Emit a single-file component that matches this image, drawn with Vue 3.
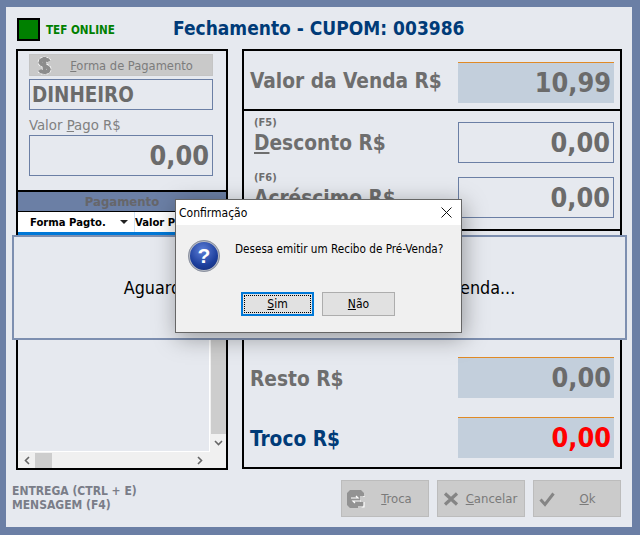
<script setup>
const rightRows = [
  { label: 'Resto R$', value: '0,00', cls: '' },
  { label: 'Troco R$', value: '0,00', cls: 'troco' }
]
</script>

<template>
  <div class="window">
    <header class="top">
      <span class="led"></span>
      <span class="tef">TEF ONLINE</span>
      <h1 class="title">Fechamento - CUPOM: 003986</h1>
    </header>

    <main class="cols">
      <section class="left">
        <div class="pay-form">
          <div class="form-btn">
            <svg class="dollar" width="15" height="19" viewBox="0 0 20 25">
              <path d="M16 7C14 3.500 5 3 4.500 8S16 12.500 15.800 17.500 6 22.500 3.500 18.500M10 1v23" fill="none" stroke="#fff" stroke-width="7" stroke-dasharray="2 1" />
              <path d="M16 7C14 3.500 5 3 4.500 8S16 12.500 15.800 17.500 6 22.500 3.500 18.500M10 1v23" fill="none" stroke="#8c8c8c" stroke-width="5" />
            </svg>
            <span><u>F</u>orma de Pagamento</span>
          </div>
          <div class="name-field">DINHEIRO</div>
          <div class="pago-label">Valor <u>P</u>ago R$</div>
          <div class="field outlined pago">0,00</div>
        </div>

        <div class="pay-head">Pagamento</div>
        <div class="grid-head">
          <div class="col-a">Forma Pagto.<i class="caret"></i></div>
          <div class="col-b">Valor Pago</div>
        </div>
        <div class="list">
          <div class="list-body"></div>
          <div class="vbar">
            <div class="vthumb"></div>
            <svg width="9" height="6" viewBox="0 0 9 6"><path d="M1 1l3.500 3.500L8 1" fill="none" stroke="#666" stroke-width="1.600" /></svg>
          </div>
        </div>
        <div class="hbar">
          <svg width="6" height="9" viewBox="0 0 6 9"><path d="M5 1L1.500 4.500 5 8" fill="none" stroke="#666" stroke-width="1.600" /></svg>
          <div class="hthumb"></div>
          <svg width="6" height="9" viewBox="0 0 6 9"><path d="M1 1l3.500 3.500L1 8" fill="none" stroke="#666" stroke-width="1.600" /></svg>
        </div>
      </section>

      <section class="right">
        <div class="sec sec-one">
          <div class="row">
            <span class="lbl first">Valor da Venda R$</span>
            <div class="field shaded">10,99</div>
          </div>
        </div>
        <div class="sec sec-two">
          <div class="row">
            <span class="lbl stacked"><small>(F5)</small><span><u>D</u>esconto R$</span></span>
            <div class="field outlined">0,00</div>
          </div>
          <div class="row">
            <span class="lbl stacked"><small>(F6)</small><span><u>A</u>créscimo R$</span></span>
            <div class="field outlined">0,00</div>
          </div>
        </div>
        <div class="sec sec-three">
          <div v-for="r in rightRows" :key="r.label" class="row" :class="r.cls">
            <span class="lbl first">{{ r.label }}</span>
            <div class="field shaded">{{ r.value }}</div>
          </div>
        </div>
      </section>
    </main>

    <footer class="bottom">
      <div class="hints">
        <div>ENTREGA (CTRL + E)</div>
        <div>MENSAGEM (F4)</div>
      </div>
      <div class="actions">
        <button class="act">
          <svg width="18" height="18" viewBox="0 0 18 18">
            <path d="M3 0h11l3 3v3H13v6h4v3l-3 3H3l-3-3V3z" fill="#929292" />
            <path d="M4 8h7l-2-2M14 11H6l2 2M17 7v-1M17 12v5h-6" fill="none" stroke="#fff" stroke-width="1.200" />
          </svg>
          <span class="act-text"><u>T</u>roca</span>
        </button>
        <button class="act">
          <svg width="16" height="16" viewBox="0 0 16 16"><path d="M2 2.500l12 11M14 2.500L2 13.500" stroke="#858585" stroke-width="3.200" fill="none" /></svg>
          <span class="act-text"><u>C</u>ancelar</span>
        </button>
        <button class="act">
          <svg width="16" height="16" viewBox="0 0 16 16"><path d="M1.500 8.500l4.500 5L14.500 2.500" stroke="#858585" stroke-width="3" fill="none" /></svg>
          <span class="act-text"><u>O</u>k</span>
        </button>
      </div>
    </footer>

    <div class="wait">Aguardando Finalização da Gravação da Venda...</div>

    <div class="dialog">
      <div class="dlg-title">
        <span>Confirmação</span>
        <svg width="11" height="11" viewBox="0 0 11 11"><path d="M.5.500l10 10M10.500.500l-10 10" stroke="#111" stroke-width="1" fill="none" /></svg>
      </div>
      <div class="dlg-body">
        <div class="dlg-msg">
          <div class="qicon">?</div>
          <p>Desesa emitir um Recibo de Pré-Venda?</p>
        </div>
        <div class="dlg-btns">
          <button class="dbtn focus"><span class="dots"><u>S</u>im</span></button>
          <button class="dbtn"><u>N</u>ão</button>
        </div>
      </div>
    </div>
  </div>
</template>

<style>
html, body { margin: 0; background: #6b7fa5; }
</style>

<style scoped>
* { box-sizing: border-box; }
.window {
  position: relative;
  width: 626px;
  height: 520px;
  margin: 7px 0 0 6px;
  background: #e6e9ef;
  font-family: Tahoma, "DejaVu Sans Condensed", "Noto Sans", sans-serif;
  color: #6b6b6b;
}
.top { display: flex; align-items: center; height: 42px; padding: 3px 0 0 11px; }
.led { width: 23px; height: 23px; background: #008000; border: 2px solid #000; }
.tef { margin-left: 6px; width: 127px; font-size: 11.600px; font-weight: 700; color: #008000; }
.title { margin: 0 0 4px; font-size: 19px; font-weight: 700; color: #003b78; }
.cols { display: flex; align-items: flex-start; gap: 14px; padding-left: 10px; }
.left { width: 212px; height: 421px; border: 2px solid #000; display: flex; flex-direction: column; }
.pay-form { height: 139px; padding: 3px 13px 0 11px; }
.form-btn {
  position: relative; height: 22px; background: #c9c9c9; border: 1px solid #c4c4c4;
  display: flex; align-items: center; justify-content: center; padding-left: 21px;
  font-size: 12.800px; color: #7c7c7c;
}
.dollar { position: absolute; left: 7px; top: 1px; }
.name-field { height: 31px; margin-top: 3px; border: 1px solid #6b7fa5; padding-left: 2px; font-size: 20.400px; line-height: 31px; font-weight: 700; }
.pago-label { height: 25px; padding-top: 5px; font-size: 14.800px; line-height: 20px; color: #808080; }
.field { width: 156px; height: 41px; text-align: right; padding-right: 3px; font-size: 26.800px; font-weight: 700; line-height: 41px; color: #6b6b6b; }
.outlined { border: 1px solid #6b7fa5; line-height: 39px; }
.shaded { background: #c3cfdc; border-top: 1px solid #e08a26; line-height: 39px; }
.pago { width: auto; }
.pay-head {
  height: 21px; background: #6b7fa5; border-top: 2px solid #000;
  text-align: center; font-size: 13px; line-height: 19px; font-weight: 700; color: #66666a;
}
.grid-head { display: flex; height: 24px; background: #fff; border-top: 1px solid #000; border-bottom: 3px solid #0078d7; font-size: 11.200px; font-weight: 700; color: #000; line-height: 21px; }
.col-a { position: relative; width: 117px; padding-left: 12px; border-right: 1px solid #cfe4f7; }
.col-b { white-space: nowrap; }
.caret { position: absolute; left: 102px; top: 8px; border: 4px solid transparent; border-top: 4px solid #222; border-bottom: 0; }
.list { flex: 1; display: flex; min-height: 0; }
.list-body { flex: 1; border-bottom: 1px solid #fff; border-right: 1px solid #fff; margin-left: 1px; }
.vbar { width: 16px; background: #f0f0f0; display: flex; flex-direction: column; align-items: center; justify-content: flex-end; padding-bottom: 6px; }
.vthumb { width: 15px; flex: 1; background: #cdcdcd; margin-bottom: 6px; }
.hbar { height: 16px; background: #f0f0f0; display: flex; align-items: center; padding-left: 6px; }
.hthumb { width: 17px; height: 15px; background: #cdcdcd; margin: 0 145px 0 5px; }
.right { width: 380px; height: 420px; border: 2px solid #000; display: flex; flex-direction: column; }
.sec { padding-right: 6px; padding-left: 6px; }
.row { display: flex; justify-content: space-between; align-items: center; }
.sec-one { height: 60px; padding-top: 11px; border-bottom: 2px solid #000; }
.sec-one .lbl { padding-bottom: 3px; }
.sec-two { height: 120px; padding-top: 11px; border-bottom: 2px solid #000; display: flex; flex-direction: column; gap: 14px; }
.sec-three { flex: 1; display: flex; flex-direction: column; justify-content: flex-end; gap: 19px; padding-bottom: 9px; }
.sec-three .lbl { padding-top: 3px; }
.lbl { font-size: 20.700px; font-weight: 700; color: #6e6e6e; }
.stacked { display: flex; flex-direction: column; align-self: flex-start; margin-top: -5px; padding-left: 4px; line-height: 25px; }
.stacked small { font-size: 11px; line-height: 12px; margin-bottom: 2px; }
.troco .lbl { color: #003b78; }
.troco .field { color: #ff0000; }
.bottom { display: flex; justify-content: space-between; align-items: flex-start; padding: 10px 11px 0 6px; }
.hints { padding-top: 4px; font-size: 12px; font-weight: 700; line-height: 14px; color: #7a7d88; }
.actions { display: flex; gap: 8px; }
.act {
  display: flex; align-items: center; width: 88px; height: 37px; padding: 0 0 0 5px;
  background: #cbcbcb; border: 1px solid #bcbcbc; font: inherit; font-size: 13px; color: #7a7a7a;
}
.act-text { flex: 1; text-align: center; }
.wait {
  position: absolute; left: 6px; top: 228px; width: 615px; height: 105px;
  border: 2px solid #7d8fb0; background: #e6e9ef;
  display: flex; align-items: center; justify-content: center;
  font-size: 17.800px; color: #000;
}
.dialog {
  position: absolute; left: 169px; top: 192px; width: 287px; height: 134px;
  border: 1px solid #666; background: #f0f0f0; box-shadow: 2px 5px 22px rgba(0, 0, 0, .35);
  display: flex; flex-direction: column; font-family: "Segoe UI", Tahoma, "DejaVu Sans Condensed", "Noto Sans", sans-serif;
}
.dlg-title { height: 25px; flex: none; background: #fff; display: flex; align-items: center; justify-content: space-between; padding: 0 9px 0 3px; font-size: 12px; color: #000; }
.dlg-body { flex: 1; position: relative; }
.dlg-msg { display: flex; padding: 15px 0 0 12px; }
.dlg-msg p { margin: 1px 0 0 15px; font-size: 11.650px; line-height: 16px; color: #000; }
.qicon {
  width: 32px; height: 32px; border-radius: 50%;
  border: 2px solid #b8bcc6; outline: 1px solid #8d93a0; outline-offset: -1px;
  background: radial-gradient(circle at 45% 30%, #5d7fd8, #1d3f9c 60%, #14296f);
  color: #fff; font: 700 21px/28px "Liberation Sans", sans-serif; text-align: center;
}
.dlg-btns { display: flex; gap: 8px; padding: 20px 0 0 65px; }
.dbtn { width: 73px; height: 24px; padding: 0; background: #e1e1e1; border: 1px solid #adadad; font: inherit; font-size: 12px; color: #000; }
.focus { border: 2px solid #0078d7; padding: 1px; }
.dots { display: block; height: 100%; line-height: 16px; border: 1px dotted #000; }
</style>
